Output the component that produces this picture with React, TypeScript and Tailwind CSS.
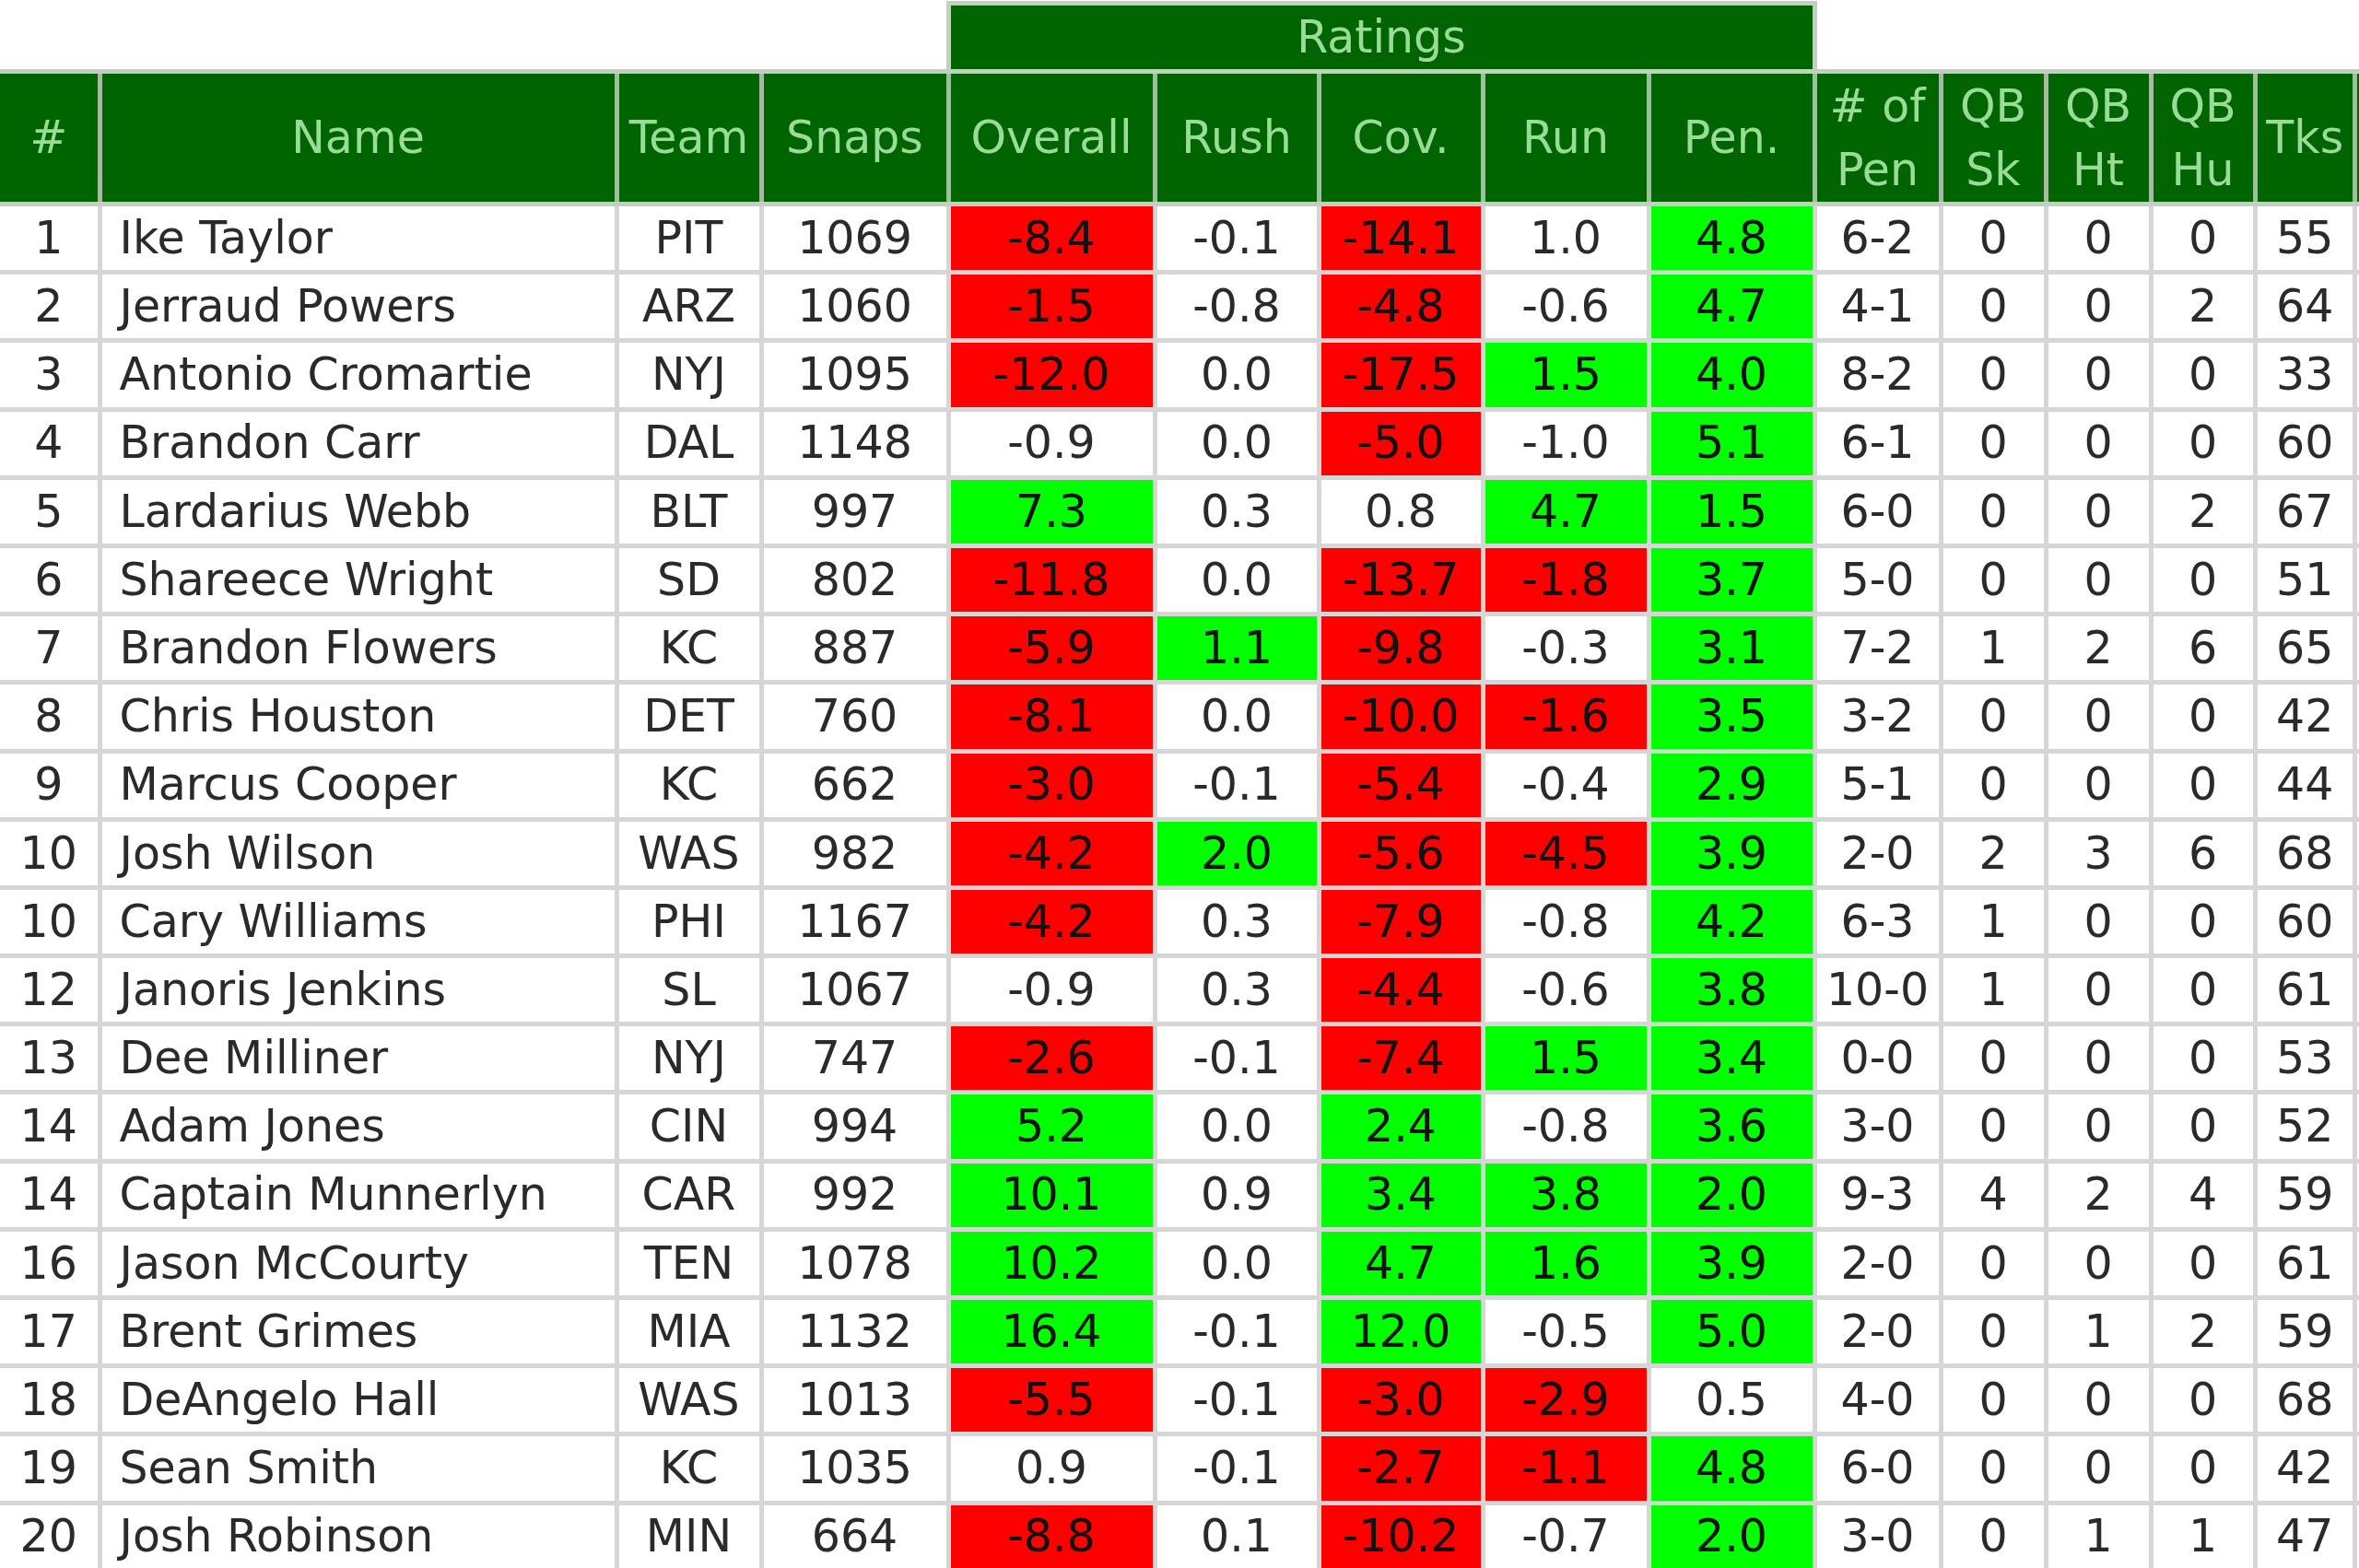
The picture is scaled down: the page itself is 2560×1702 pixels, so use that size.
type Row = {
  rank: string
  name: string
  team: string
  snaps: string
  overall: string
  rush: string
  cov: string
  run: string
  pen: string
  numPen: string
  sk: string
  ht: string
  hu: string
  tks: string
}

const rows: Row[] = [
  { rank: '1', name: 'Ike Taylor', team: 'PIT', snaps: '1069', overall: '-8.4', rush: '-0.1', cov: '-14.1', run: '1.0', pen: '4.8', numPen: '6-2', sk: '0', ht: '0', hu: '0', tks: '55' },
  { rank: '2', name: 'Jerraud Powers', team: 'ARZ', snaps: '1060', overall: '-1.5', rush: '-0.8', cov: '-4.8', run: '-0.6', pen: '4.7', numPen: '4-1', sk: '0', ht: '0', hu: '2', tks: '64' },
  { rank: '3', name: 'Antonio Cromartie', team: 'NYJ', snaps: '1095', overall: '-12.0', rush: '0.0', cov: '-17.5', run: '1.5', pen: '4.0', numPen: '8-2', sk: '0', ht: '0', hu: '0', tks: '33' },
  { rank: '4', name: 'Brandon Carr', team: 'DAL', snaps: '1148', overall: '-0.9', rush: '0.0', cov: '-5.0', run: '-1.0', pen: '5.1', numPen: '6-1', sk: '0', ht: '0', hu: '0', tks: '60' },
  { rank: '5', name: 'Lardarius Webb', team: 'BLT', snaps: '997', overall: '7.3', rush: '0.3', cov: '0.8', run: '4.7', pen: '1.5', numPen: '6-0', sk: '0', ht: '0', hu: '2', tks: '67' },
  { rank: '6', name: 'Shareece Wright', team: 'SD', snaps: '802', overall: '-11.8', rush: '0.0', cov: '-13.7', run: '-1.8', pen: '3.7', numPen: '5-0', sk: '0', ht: '0', hu: '0', tks: '51' },
  { rank: '7', name: 'Brandon Flowers', team: 'KC', snaps: '887', overall: '-5.9', rush: '1.1', cov: '-9.8', run: '-0.3', pen: '3.1', numPen: '7-2', sk: '1', ht: '2', hu: '6', tks: '65' },
  { rank: '8', name: 'Chris Houston', team: 'DET', snaps: '760', overall: '-8.1', rush: '0.0', cov: '-10.0', run: '-1.6', pen: '3.5', numPen: '3-2', sk: '0', ht: '0', hu: '0', tks: '42' },
  { rank: '9', name: 'Marcus Cooper', team: 'KC', snaps: '662', overall: '-3.0', rush: '-0.1', cov: '-5.4', run: '-0.4', pen: '2.9', numPen: '5-1', sk: '0', ht: '0', hu: '0', tks: '44' },
  { rank: '10', name: 'Josh Wilson', team: 'WAS', snaps: '982', overall: '-4.2', rush: '2.0', cov: '-5.6', run: '-4.5', pen: '3.9', numPen: '2-0', sk: '2', ht: '3', hu: '6', tks: '68' },
  { rank: '10', name: 'Cary Williams', team: 'PHI', snaps: '1167', overall: '-4.2', rush: '0.3', cov: '-7.9', run: '-0.8', pen: '4.2', numPen: '6-3', sk: '1', ht: '0', hu: '0', tks: '60' },
  { rank: '12', name: 'Janoris Jenkins', team: 'SL', snaps: '1067', overall: '-0.9', rush: '0.3', cov: '-4.4', run: '-0.6', pen: '3.8', numPen: '10-0', sk: '1', ht: '0', hu: '0', tks: '61' },
  { rank: '13', name: 'Dee Milliner', team: 'NYJ', snaps: '747', overall: '-2.6', rush: '-0.1', cov: '-7.4', run: '1.5', pen: '3.4', numPen: '0-0', sk: '0', ht: '0', hu: '0', tks: '53' },
  { rank: '14', name: 'Adam Jones', team: 'CIN', snaps: '994', overall: '5.2', rush: '0.0', cov: '2.4', run: '-0.8', pen: '3.6', numPen: '3-0', sk: '0', ht: '0', hu: '0', tks: '52' },
  { rank: '14', name: 'Captain Munnerlyn', team: 'CAR', snaps: '992', overall: '10.1', rush: '0.9', cov: '3.4', run: '3.8', pen: '2.0', numPen: '9-3', sk: '4', ht: '2', hu: '4', tks: '59' },
  { rank: '16', name: 'Jason McCourty', team: 'TEN', snaps: '1078', overall: '10.2', rush: '0.0', cov: '4.7', run: '1.6', pen: '3.9', numPen: '2-0', sk: '0', ht: '0', hu: '0', tks: '61' },
  { rank: '17', name: 'Brent Grimes', team: 'MIA', snaps: '1132', overall: '16.4', rush: '-0.1', cov: '12.0', run: '-0.5', pen: '5.0', numPen: '2-0', sk: '0', ht: '1', hu: '2', tks: '59' },
  { rank: '18', name: 'DeAngelo Hall', team: 'WAS', snaps: '1013', overall: '-5.5', rush: '-0.1', cov: '-3.0', run: '-2.9', pen: '0.5', numPen: '4-0', sk: '0', ht: '0', hu: '0', tks: '68' },
  { rank: '19', name: 'Sean Smith', team: 'KC', snaps: '1035', overall: '0.9', rush: '-0.1', cov: '-2.7', run: '-1.1', pen: '4.8', numPen: '6-0', sk: '0', ht: '0', hu: '0', tks: '42' },
  { rank: '20', name: 'Josh Robinson', team: 'MIN', snaps: '664', overall: '-8.8', rush: '0.1', cov: '-10.2', run: '-0.7', pen: '2.0', numPen: '3-0', sk: '0', ht: '1', hu: '1', tks: '47' },
]

// cell widths include the 5px right border
const W = {
  rank: 'w-[110.5px]',
  name: 'w-[561px]',
  team: 'w-[157px]',
  snaps: 'w-[203px]',
  overall: 'w-[224px]',
  rush: 'w-[178px]',
  cov: 'w-[178px]',
  run: 'w-[180px]',
  pen: 'w-[180px]',
  numPen: 'w-[137px]',
  sk: 'w-[114px]',
  ht: 'w-[114px]',
  hu: 'w-[113px]',
  tks: 'w-[108.5px]',
  extra: 'w-[160px]',
}

function rateBg(v: string) {
  const n = parseFloat(v)
  if (n > 1) return 'bg-[#00ff00] text-[#111]'
  if (n < -1) return 'bg-[#ff0000] text-[#111]'
  return 'bg-white text-[#2a2a2a]'
}

function HeadCell({ w, children }: { w: string; children?: React.ReactNode }) {
  return (
    <div className={`${w} shrink-0 h-full border-r-[5px] border-[#a3bda3] bg-[#006400] text-[#98dc98] flex items-center justify-center text-center leading-[69px]`}>
      <div>{children}</div>
    </div>
  )
}

function Cell({ w, className = 'bg-white text-[#2a2a2a] justify-center', children }: { w: string; className?: string; children?: React.ReactNode }) {
  return (
    <div className={`${w} shrink-0 h-full border-r-[5px] border-[#d6d6d6] flex items-center whitespace-nowrap ${className}`}>
      {children}
    </div>
  )
}

export default function App() {
  return (
    <div className="w-[2560px] h-[1702px] overflow-hidden bg-white pt-px font-['DejaVu_Sans',Verdana,sans-serif] text-[49px]">
      <div className="flex h-[74px] w-max">
        <div className="w-[1026.5px] shrink-0" />
        <div className="w-[945px] shrink-0 border-t-[5px] border-l-[5px] border-r-[5px] border-[#c4cfc4] bg-[#006400] text-[#98dc98] flex items-center justify-center">
          Ratings
        </div>
      </div>

      <div className="flex h-[149px] w-max border-t-[5px] border-b-[5px] border-[#c4cfc4]">
        <HeadCell w={W.rank}>#</HeadCell>
        <HeadCell w={W.name}>Name</HeadCell>
        <HeadCell w={W.team}>Team</HeadCell>
        <HeadCell w={W.snaps}>Snaps</HeadCell>
        <HeadCell w={W.overall}>Overall</HeadCell>
        <HeadCell w={W.rush}>Rush</HeadCell>
        <HeadCell w={W.cov}>Cov.</HeadCell>
        <HeadCell w={W.run}>Run</HeadCell>
        <HeadCell w={W.pen}>Pen.</HeadCell>
        <HeadCell w={W.numPen}># of<br />Pen</HeadCell>
        <HeadCell w={W.sk}>QB<br />Sk</HeadCell>
        <HeadCell w={W.ht}>QB<br />Ht</HeadCell>
        <HeadCell w={W.hu}>QB<br />Hu</HeadCell>
        <HeadCell w={W.tks}>Tks</HeadCell>
        <HeadCell w={W.extra} />
      </div>

      {rows.map((r, i) => (
        <div key={i} className="flex h-[74.2px] w-max border-b-[5px] border-[#d6d6d6]">
          <Cell w={W.rank}>{r.rank}</Cell>
          <Cell w={W.name} className="bg-white text-[#2a2a2a] justify-start pl-[19px]">{r.name}</Cell>
          <Cell w={W.team}>{r.team}</Cell>
          <Cell w={W.snaps}>{r.snaps}</Cell>
          <Cell w={W.overall} className={`${rateBg(r.overall)} justify-center`}>{r.overall}</Cell>
          <Cell w={W.rush} className={`${rateBg(r.rush)} justify-center`}>{r.rush}</Cell>
          <Cell w={W.cov} className={`${rateBg(r.cov)} justify-center`}>{r.cov}</Cell>
          <Cell w={W.run} className={`${rateBg(r.run)} justify-center`}>{r.run}</Cell>
          <Cell w={W.pen} className={`${rateBg(r.pen)} justify-center`}>{r.pen}</Cell>
          <Cell w={W.numPen}>{r.numPen}</Cell>
          <Cell w={W.sk}>{r.sk}</Cell>
          <Cell w={W.ht}>{r.ht}</Cell>
          <Cell w={W.hu}>{r.hu}</Cell>
          <Cell w={W.tks}>{r.tks}</Cell>
          <Cell w={W.extra} />
        </div>
      ))}
    </div>
  )
}
